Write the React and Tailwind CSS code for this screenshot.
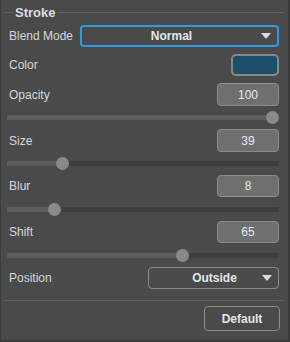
import React from "react";

const font = { fontFamily: '"Liberation Sans", Arial, sans-serif' };

function Caret() {
  return (
    <svg width="10" height="6" viewBox="0 0 10 6" className="block">
      <path d="M0 0 L10 0 L5 6 Z" fill="#d8dce2" />
    </svg>
  );
}

function ValueBox({ value, h = "h-[23px]" }) {
  return (
    <div
      className={`w-[62px] ${h} rounded-[4px] border border-[#8c8c8c] bg-[#6f6f6f] flex items-center justify-center text-[12px] text-[#e6eaee]`}
    >
      {value}
    </div>
  );
}

function Slider({ pos, mt = "mt-[5px]" }) {
  return (
    <div className={`${mt} relative h-[13px] ml-[6px] mr-[9px] flex items-center`}>
      <div className="w-full h-[5px] bg-[#3e3e3e] relative">
        <div className="h-full bg-[#5c5c5c]" style={{ width: pos }} />
      </div>
      <div
        className="absolute top-0 w-[13px] h-[13px] rounded-full bg-[#8a8a8a]"
        style={{ left: pos - 6.5 }}
      />
    </div>
  );
}

function LabelRow({ label, children, mt, h }) {
  return (
    <div className={`${mt} ${h} flex items-center justify-between pl-[8px] pr-[9px]`}>
      <span className="text-[12px] text-[#d3d8de]">{label}</span>
      {children}
    </div>
  );
}

export default function App() {
  return (
    <div
      style={font}
      className="w-[290px] h-[342px] bg-[#4a4a4a] border-l border-r-2 border-b-2 border-[#3b3b3b] flex flex-col"
    >
      <div className="h-[25px] flex items-center pl-[2px] pr-[4px]">
        <div className="w-[10px] h-px bg-[#606060]" />
        <span className="px-[2px] text-[13px] font-bold text-[#dadee3]">Stroke</span>
        <div className="flex-1 h-px bg-[#606060]" />
      </div>

      <div className="h-[22px] flex items-center pl-[8px] pr-[9px]">
        <span className="text-[12px] text-[#d3d8de] w-[71px]">Blend Mode</span>
        <div className="flex-1 h-[22px] rounded-[4px] border-2 border-[#2f9be0] flex items-center pl-[56px] pr-[6px]">
          <span className="flex-1 text-center text-[12px] font-bold text-[#e2e6ea] -ml-[56px]">
            Normal
          </span>
          <Caret />
        </div>
      </div>

      <LabelRow label="Color" mt="mt-[7px]" h="h-[22px]">
        <div className="w-[48px] h-[22px] rounded-[5px] border-2 border-[#888888] bg-[#1b4f6b]" />
      </LabelRow>

      <LabelRow label="Opacity" mt="mt-[7px]" h="h-[23px]">
        <ValueBox value="100" />
      </LabelRow>
      <Slider pos={265} />

      <LabelRow label="Size" mt="mt-[5px]" h="h-[23px]">
        <ValueBox value="39" />
      </LabelRow>
      <Slider pos={55} />

      <LabelRow label="Blur" mt="mt-[5px]" h="h-[22px]">
        <ValueBox value="8" h="h-[22px]" />
      </LabelRow>
      <Slider pos={47} mt="mt-[6px]" />

      <LabelRow label="Shift" mt="mt-[5px]" h="h-[22px]">
        <ValueBox value="65" h="h-[22px]" />
      </LabelRow>
      <Slider pos={175} mt="mt-[6px]" />

      <LabelRow label="Position" mt="mt-[5px]" h="h-[22px]">
        <div className="w-[131px] h-[22px] rounded-[4px] border border-[#8a8a8a] flex items-center pl-[18px] pr-[6px]">
          <span className="flex-1 text-center text-[12px] font-bold text-[#e2e6ea]">Outside</span>
          <Caret />
        </div>
      </LabelRow>

      <div className="mt-[11px] ml-[2px] mr-[4px] h-px bg-[#5c5c5c]" />

      <div className="mt-[5px] flex justify-end pr-[8px]">
        <div className="w-[76px] h-[25px] rounded-[4px] border border-[#8a8a8a] flex items-center justify-center text-[12px] font-bold text-[#e2e6ea]">
          Default
        </div>
      </div>
    </div>
  );
}
